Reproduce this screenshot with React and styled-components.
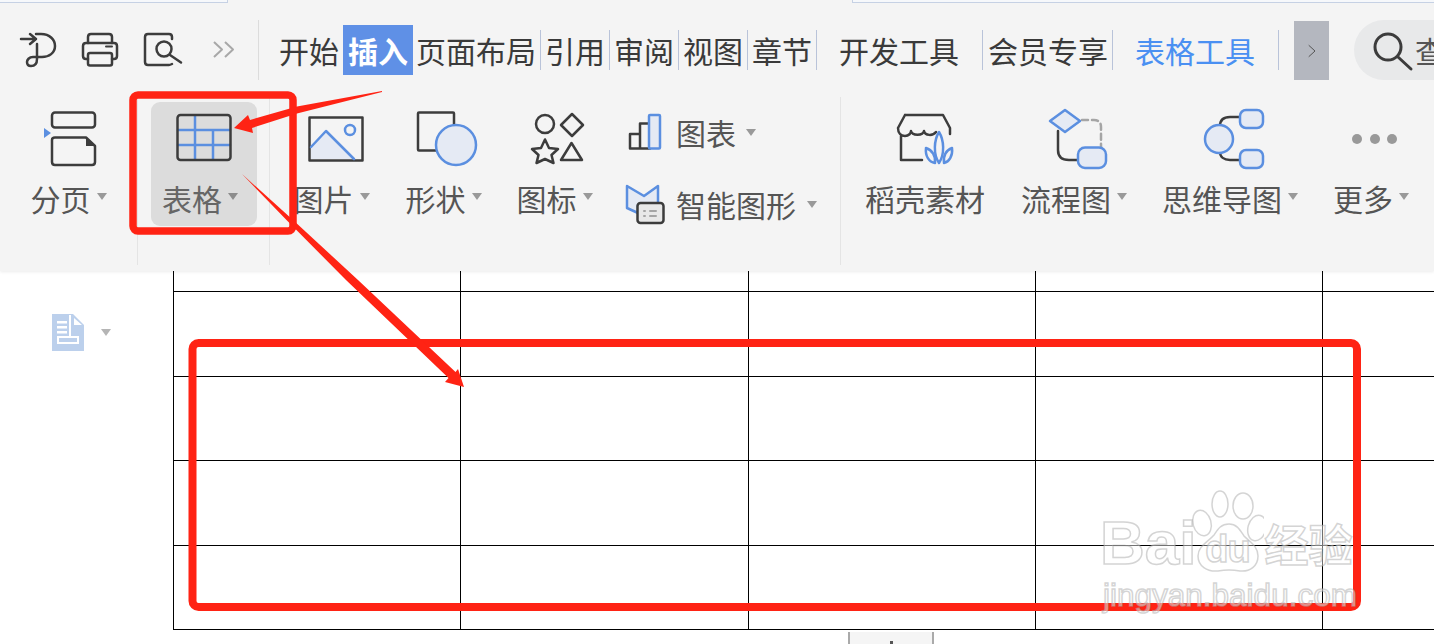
import React from "react";
import styled, { createGlobalStyle } from "styled-components";

const Global = createGlobalStyle`
  html, body { margin: 0; padding: 0; background: #fff; overflow: hidden; }
  body { font-family: "Noto Sans CJK SC", "Noto Sans", sans-serif; }
`;

const Page = styled.div`
  position: relative;
  width: 1434px;
  height: 644px;
  overflow: hidden;
  background: #fff;
`;

const Ribbon = styled.header`
  position: relative;
  z-index: 1;
  height: 271px;
  box-sizing: border-box;
  background: #f4f4f4;
  box-shadow: 0 1px 3px rgba(0, 0, 0, 0.08);
`;

const WindowStrip = styled.div`
  display: flex;
  height: 3px;
`;

const WindowTab = styled.div`
  box-sizing: border-box;
  width: ${(p) => p.$w || "auto"};
  flex: ${(p) => (p.$w ? "none" : "1")};
  background: #f6f8fb;
  border-bottom: 1px solid #c6d1e4;
  border-right: ${(p) => (p.$w ? "1px solid #c6d1e4" : "0")};
  border-left: ${(p) => (p.$w ? "0" : "1px solid #c6d1e4")};
`;

const StripGap = styled.div`
  width: 624px;
  flex: none;
`;

const MenuRow = styled.nav`
  display: flex;
  align-items: center;
  height: 60px;
  margin-top: 17px;
  white-space: nowrap;
`;

const QuickBar = styled.div`
  box-sizing: border-box;
  display: flex;
  align-items: center;
  width: 259px;
  height: 60px;
  padding-left: 20px;
  border-right: 1px solid #dcdcdc;
  flex: none;
`;

const Glyph = styled.svg`
  flex: none;
  display: block;
  overflow: visible;
  fill: none;
  stroke: #3c3c3c;
  stroke-width: 2.5;
  stroke-linejoin: round;
  stroke-linecap: round;
  margin-left: ${(p) => p.$ml || 0}px;
  .b { stroke: #5b8fe0; fill: #e5eaf4; }
  .l { stroke: #5b8fe0; fill: none; }
  .g { stroke: #a5a5a5; fill: none; }
  .k { fill: #3c3c3c; stroke: none; }
  .p { fill: #5b8fe0; stroke: none; }
  .d { fill: #999; stroke: none; }
`;

const Tabs = styled.div`
  display: flex;
  align-items: center;
  padding-left: 16px;
`;

const Tab = styled.div`
  box-sizing: content-box;
  height: 40px;
  line-height: 40px;
  font-size: 30px;
  color: ${(p) => (p.$blue ? "#4a90f2" : "#3a3a3a")};
  padding: 0 ${(p) => p.$r ?? 4}px 0 ${(p) => p.$l ?? 4}px;
  border-right: ${(p) => (p.$sep ? "1px solid #b9c3d9" : "0")};
`;

const ActiveTab = styled.div`
  height: 50px;
  line-height: 50px;
  padding: 0 5px 0 5px;
  margin-right: -1px;
  font-size: 30px;
  font-weight: 700;
  color: #fff;
  background: #5f90e6;
`;

const ScrollButton = styled.div`
  display: flex;
  align-items: center;
  justify-content: center;
  width: 35px;
  height: 59px;
  margin: 1px 0 0 15px;
  background: #b4b7bf;
  flex: none;
`;

const SearchPill = styled.div`
  display: flex;
  align-items: center;
  flex: none;
  width: 140px;
  height: 60px;
  margin-left: 25px;
  padding-left: 20px;
  border-radius: 30px;
  background: #e8e9ea;
  font-size: 30px;
  color: #555;
`;

const SearchText = styled.span`
  margin-left: 3px;
`;

const ToolRow = styled.div`
  display: flex;
  height: 168px;
  margin-top: 17px;
`;

const Group = styled.section`
  box-sizing: border-box;
  display: flex;
  align-items: flex-start;
  flex: ${(p) => (p.$w ? "none" : "1")};
  width: ${(p) => (p.$w ? `${p.$w}px` : "auto")};
  padding: 5px 0 0 ${(p) => p.$pl || 0}px;
  border-right: ${(p) => (p.$w ? "1px solid #e4e4e4" : "0")};
`;

const Tool = styled.div`
  box-sizing: border-box;
  display: flex;
  flex-direction: column;
  align-items: center;
  flex: none;
  width: ${(p) => p.$w}px;
  height: 124px;
  padding-top: 8px;
  border-radius: 9px;
  background: ${(p) => (p.$active ? "#dcdcdc" : "transparent")};
  color: ${(p) => (p.$active ? "#666" : "#555")};
`;

const IconSlot = styled.div`
  display: flex;
  align-items: center;
  justify-content: center;
  height: 58px;
  margin-bottom: 10px;
`;

const LabelRow = styled.div`
  display: flex;
  align-items: center;
  height: 40px;
  padding: 0 ${(p) => p.$pr ?? 7}px 0 ${(p) => p.$pl ?? 0}px;
  font-size: 30px;
  line-height: 40px;
  white-space: nowrap;
`;

const Caret = styled.i`
  display: block;
  flex: none;
  width: 0;
  height: 0;
  margin: ${(p) => p.$mt ?? -3}px 0 0 ${(p) => p.$ml || 6}px;
  border-left: 5.5px solid transparent;
  border-right: 5.5px solid transparent;
  border-top: 7px solid ${(p) => p.$c || "#999"};
`;

const Stack = styled.div`
  display: flex;
  flex-direction: column;
  gap: 32px;
  flex: none;
  padding: 10px 0 0 13px;
  color: #555;
`;

const StackRow = styled.div`
  display: flex;
  align-items: center;
  height: 40px;
  font-size: 30px;
  line-height: 40px;
  white-space: nowrap;
`;

const Doc = styled.main`
  display: flex;
  align-items: flex-start;
`;

const Gutter = styled.aside`
  box-sizing: border-box;
  display: flex;
  align-items: center;
  width: 173px;
  flex: none;
  padding: 43px 0 0 52px;
`;

const PageColumn = styled.div`
  flex: 1;
  min-width: 0;
`;

const Grid = styled.div`
  display: grid;
  grid-template-columns: 287px 288px 287px 287px 112px;
  grid-template-rows: 21px 85px 84px 85px 84px;
`;

const Cell = styled.div`
  box-sizing: border-box;
  border-left: 1px solid #000;
  border-bottom: 1px solid #000;
`;

const RowHandle = styled.div`
  box-sizing: border-box;
  position: relative;
  width: 86px;
  height: 14px;
  margin: 2px 0 0 675px;
  background: #f5f5f5;
  border-left: 2px solid #aaa;
  border-right: 2px solid #aaa;
  &::after {
    content: "";
    position: absolute;
    left: 40px;
    top: 9px;
    width: 3px;
    height: 5px;
    background: #555;
  }
`;

const Marks = styled.svg`
  position: absolute;
  left: 0;
  top: 0;
  z-index: 2;
  pointer-events: none;
  rect { fill: none; stroke: #ff2314; }
  polygon { fill: #ff2314; }
`;

const Watermark = styled.div`
  position: absolute;
  z-index: 3;
  left: 1100px;
  top: 488px;
  width: 270px;
  font-family: "Liberation Sans", sans-serif;
  color: rgba(255, 255, 255, 0.45);
  -webkit-text-stroke: 1.5px rgba(170, 170, 170, 0.5);
`;

const MarkTop = styled.div`
  display: flex;
  align-items: flex-end;
  height: 86px;
`;

const BigWord = styled.span`
  font-size: 62px;
  font-weight: 700;
  line-height: 62px;
`;

const PawBox = styled.div`
  position: relative;
  display: flex;
  align-items: flex-end;
  justify-content: center;
  width: 74px;
  height: 86px;
  margin-left: -6px;
`;

const PawDraw = styled.svg`
  position: absolute;
  left: 0;
  top: 0;
  fill: rgba(255, 255, 255, 0.35);
  stroke: rgba(170, 170, 170, 0.5);
  stroke-width: 1.5;
`;

const DuWord = styled.span`
  position: relative;
  font-size: 38px;
  font-weight: 700;
  line-height: 44px;
  margin-bottom: 3px;
  letter-spacing: -1px;
`;

const CnWord = styled.span`
  font-family: "Noto Sans CJK SC", sans-serif;
  font-size: 44px;
  font-weight: 700;
  line-height: 62px;
`;

const MarkUrl = styled.div`
  font-size: 31.5px;
  line-height: 36px;
  margin: 3px 0 0 3px;
  white-space: nowrap;
`;

const tools3 = [
  ["图片", 111, 8, <Glyph key="a" viewBox="306 110 60 58" width="60" height="58">
    <rect x="309.5" y="117.5" width="53" height="43" />
    <path className="b" style={{ stroke: "none" }} d="M311 147 L326 131 L354 159 H311Z" />
    <path className="l" d="M311 147 L326 131 L354 159" />
    <circle className="l" cx="350" cy="130" r="5" />
  </Glyph>],
  ["形状", 111, 6, <Glyph key="b" viewBox="416 110 62 58" width="62" height="58">
    <rect x="418" y="112.5" width="36" height="38" rx="1" />
    <circle className="b" cx="456" cy="145" r="20" />
  </Glyph>],
  ["图标", 111, 6, <Glyph key="c" viewBox="530 110 56 58" width="56" height="58">
    <circle cx="545" cy="124" r="9" />
    <path d="M572 114 L583 125 L572 136 L561 125Z" />
    <path d="M545 139.5 L549 148 L558 149 L551.5 155 L553.5 163 L545 159 L536.5 163 L538.5 155 L532 149 L541 148Z" />
    <path d="M571.5 143 L582 160 H561Z" />
  </Glyph>],
];

const tools4 = [
  ["稻壳素材", 150, false, 4, 4, <Glyph key="a" viewBox="897 110 58 58" width="58" height="58">
    <path d="M906 115 H944 L951 128 V134 M906 115 L899 128 C899 133 902 136 906 136 C910 136 912 133 912 131 C913 136 924 136 925 131 C926 136 934 136 937 132" />
    <path d="M902 136 V160 H923" />
    <path className="l" d="M940 132 C935 140 934 154 940 163 C946 154 945 140 940 132Z" />
    <path className="l" d="M927 148 C926 156 930 162 936 163 C937 156 933 150 927 148Z" />
    <path className="l" d="M953 148 C947 150 944 156 945 163 C950 162 954 156 953 148Z" />
  </Glyph>],
  ["流程图", 158, true, 10, 0, <Glyph key="b" viewBox="1050 110 60 58" width="60" height="58">
    <path d="M1059 131 V150 C1059 157 1063 160 1070 160 H1080" />
    <path className="g" strokeDasharray="6 4" d="M1083 120 H1095 C1100 120 1102 123 1102 127 V147" />
    <path className="b" d="M1066 110 L1081 121 L1066 132 L1051 121Z" />
    <rect className="b" x="1079" y="147.5" width="28" height="20.5" rx="7" />
  </Glyph>],
  ["思维导图", 152, true, 8, 0, <Glyph key="c" viewBox="1204 110 60 58" width="60" height="58">
    <path d="M1220 126 C1220 120 1224 117 1230 117 H1241" />
    <path d="M1220 152 C1220 157 1224 160 1230 160 H1241" />
    <circle className="b" cx="1219" cy="139" r="14" />
    <rect className="b" x="1240" y="110" width="23" height="18" rx="6" />
    <rect className="b" x="1240" y="150" width="23" height="18" rx="6" />
  </Glyph>],
  ["更多", 130, true, 8, 0, <Glyph key="d" viewBox="1351 110 48 58" width="48" height="58">
    <circle className="d" cx="1357" cy="139" r="5" />
    <circle className="d" cx="1375" cy="139" r="5" />
    <circle className="d" cx="1392" cy="139" r="5" />
  </Glyph>],
];

const rowHeights = [0, 1, 2, 3, 4];
const colWidths = [0, 1, 2, 3, 4];

export default function App() {
  return (
    <Page>
      <Global />
      <Ribbon>
        <WindowStrip>
          <WindowTab $w="228px" />
          <StripGap />
          <WindowTab />
        </WindowStrip>
        <MenuRow>
          <QuickBar>
            <Glyph viewBox="20 33 36 36" width="36" height="36">
              <path d="M21 40 H36 M30 35 L36 40 L30 45" />
              <path d="M36 35 H41 C50 35 55 41 55 47 C55 54 49 58 42 58 H33 C29 58 27 61 27 63 C27 66 29 67 31 67 C35 67 37 64 37 60 V45" />
            </Glyph>
            <Glyph $ml={26} viewBox="82 32 36 34" width="36" height="34">
              <path d="M88 42 V36 C88 34 89 33 91 33 H109 C111 33 112 34 112 36 V42" />
              <path d="M88 58 H86 C84 58 83 57 83 55 V45 C83 43 84 42 86 42 H114 C116 42 117 43 117 45 V55 C117 57 116 58 114 58 H112" />
              <rect x="88" y="52" width="24" height="12.5" rx="2" />
              <path strokeWidth="2" d="M106 45.5 H112" />
            </Glyph>
            <Glyph $ml={26} viewBox="144 32 38 34" width="38" height="34">
              <path d="M172 38 V36 C172 34 171 33 169 33 H148 C146 33 145 34 145 36 V61 C145 63 146 64 148 64 H169 C170 64 171 63.5 172 63" />
              <circle cx="164" cy="48" r="7.5" />
              <path d="M170 54 L181 61.5" />
            </Glyph>
            <Glyph $ml={30} viewBox="212 40 24 20" width="24" height="20" style={{ stroke: "#a8a8a8" }}>
              <path strokeLinecap="butt" strokeWidth="2" d="M214 42 L222 49.5 L214 57 M225 42 L233 49.5 L225 57" />
            </Glyph>
          </QuickBar>
          <Tabs>
            <Tab>开始</Tab>
            <ActiveTab>插入</ActiveTab>
            <Tab $sep>页面布局</Tab>
            <Tab $sep>引用</Tab>
            <Tab $sep>审阅</Tab>
            <Tab $sep>视图</Tab>
            <Tab $sep>章节</Tab>
            <Tab $sep $l={22} $r={23}>开发工具</Tab>
            <Tab $sep $l={5} $r={4}>会员专享</Tab>
            <Tab $sep $blue $l={22} $r={23}>表格工具</Tab>
          </Tabs>
          <ScrollButton>
            <Glyph viewBox="0 0 8 12" width="8" height="12" style={{ stroke: "#555", strokeWidth: 1 }}>
              <path d="M1 0.5 L7 6 L1 11.5" />
            </Glyph>
          </ScrollButton>
          <SearchPill>
            <Glyph viewBox="1374 31 38 38" width="38" height="38" style={{ strokeWidth: 3 }}>
              <circle cx="1388" cy="47" r="13" />
              <path d="M1398 57 L1411 69" />
            </Glyph>
            <SearchText>查</SearchText>
          </SearchPill>
        </MenuRow>
        <ToolRow>
          <Group $w={138} $pl={2}>
            <Tool $w={135}>
              <IconSlot>
                <Glyph viewBox="43 110 56 58" width="56" height="58">
                  <rect x="53" y="112.5" width="43" height="15" rx="3" />
                  <path className="p" d="M45 128 L52 133 L45 138Z" />
                  <path d="M56 137.5 H87 L96 146 V162 C96 164 95 165 93 165 H56 C54 165 53 164 53 162 V140 C53 138 54 137.5 56 137.5Z" />
                  <path className="k" d="M87 137 L96 146 H87Z" />
                </Glyph>
              </IconSlot>
              <LabelRow $pr={2}>分页<Caret /></LabelRow>
            </Tool>
          </Group>
          <Group $w={132} $pl={13}>
            <Tool $w={106} $active>
              <IconSlot>
                <Glyph viewBox="175 110 58 58" width="58" height="58">
                  <path className="l" d="M178 130 H230 M178 145 H230 M195 116 V159 M213 130 V159" />
                  <rect x="177.5" y="115" width="53" height="45" rx="3" />
                </Glyph>
              </IconSlot>
              <LabelRow $pr={8}>表格<Caret $c="#8c8c8c" /></LabelRow>
            </Tool>
          </Group>
          <Group $w={571} $pl={10}>
            {tools3.map(([label, w, pr, icon]) => (
              <Tool key={label} $w={w}>
                <IconSlot>{icon}</IconSlot>
                <LabelRow $pr={pr}>{label}<Caret /></LabelRow>
              </Tool>
            ))}
            <Stack>
              <StackRow>
                <Glyph viewBox="626 112 50 40" width="50" height="40">
                  <path d="M640 134 H630 V148.5 H650 M640 148.5 V123.5 H650" />
                  <rect className="b" x="649" y="115" width="11" height="33.5" rx="1" />
                </Glyph>
                图表<Caret $ml={10} $mt={0} />
              </StackRow>
              <StackRow>
                <Glyph viewBox="626 184 50 40" width="50" height="40">
                  <path className="b" d="M627 186 L644 196 L658 186 V205 H638 V213 L627 208Z" />
                  <rect x="637.5" y="203" width="26" height="20" rx="3" style={{ fill: "#e8e8e8" }} />
                  <path className="g" d="M644 211 H645 M650 211 H656 M644 216 H645 M650 216 H656" strokeWidth="2" />
                </Glyph>
                智能图形<Caret $ml={11} $mt={0} />
              </StackRow>
            </Stack>
          </Group>
          <Group $pl={9}>
            {tools4.map(([label, w, caret, pr, pl, icon]) => (
              <Tool key={label} $w={w}>
                <IconSlot>{icon}</IconSlot>
                <LabelRow $pr={pr} $pl={pl}>{label}{caret && <Caret />}</LabelRow>
              </Tool>
            ))}
          </Group>
        </ToolRow>
      </Ribbon>
      <Doc>
        <Gutter>
          <svg viewBox="52 314 32 37" width="32" height="37" aria-hidden="true">
            <path fill="#bcd0ec" d="M52 314 H73 L84 325 V351 H52Z" />
            <path fill="#fff" d="M74 318 L82 325 H74Z M57 321 H67 V323.5 H57Z M57 326 H67 V328.5 H57Z M57 331 H67 V333.5 H57Z M69 315 H71 V336 H79 V344 H57 V336 H59 V342 H77 V338 H57 V336 H69Z" />
          </svg>
          <Caret $ml={17} $mt={0} $c="#b5b5b5" />
        </Gutter>
        <PageColumn>
          <Grid>
            {rowHeights.flatMap((r) =>
              colWidths.map((c) => <Cell key={`${r}-${c}`} />)
            )}
          </Grid>
          <RowHandle />
        </PageColumn>
      </Doc>
      <Marks viewBox="0 0 1434 644" width="1434" height="644" aria-hidden="true">
        <rect x="133" y="95" width="160" height="136" rx="5" strokeWidth="7.5" />
        <rect x="192.5" y="343" width="1164.5" height="264" rx="6" strokeWidth="8" />
        <polygon points="382,91 297,106.5 250,120 248,115 234,128 253,133 252,128 297,113.5 382,92" />
        <polygon points="242,174 293,220 358,280 455.5,372 458,369 464,387 445,382 448.5,378 346,280 286.5,220" />
      </Marks>
      <Watermark>
        <MarkTop>
          <BigWord>Bai</BigWord>
          <PawBox>
            <PawDraw viewBox="0 0 74 86" width="74" height="86" aria-hidden="true">
              <ellipse cx="12" cy="35" rx="9" ry="13" transform="rotate(-15 12 35)" />
              <ellipse cx="30" cy="16" rx="8" ry="13" />
              <ellipse cx="53" cy="18" rx="10" ry="13" />
              <ellipse cx="67" cy="40" rx="9" ry="13" transform="rotate(15 67 40)" />
              <path d="M39 36 C47 36 50 42 54 48 C60 54 68 58 68 68 C68 78 60 84 50 83 C44 82 34 82 28 83 C17 84 8 78 8 68 C8 58 18 54 24 47 C28 41 31 36 39 36Z" />
            </PawDraw>
            <DuWord>du</DuWord>
          </PawBox>
          <CnWord>经验</CnWord>
        </MarkTop>
        <MarkUrl>jingyan.baidu.com</MarkUrl>
      </Watermark>
    </Page>
  );
}
